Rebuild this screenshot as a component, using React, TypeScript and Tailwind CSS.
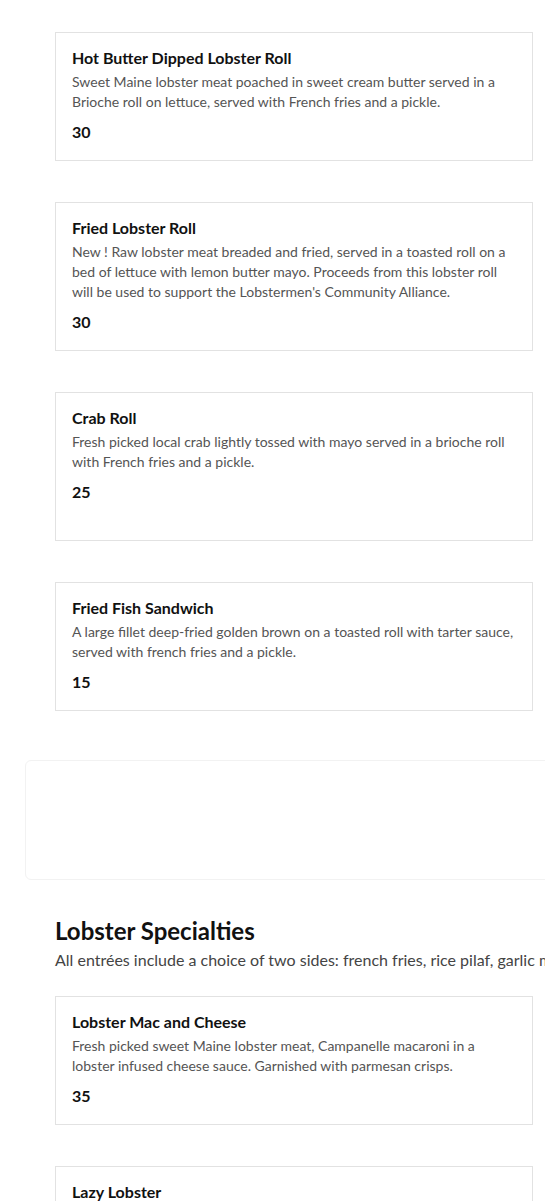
import React from "react";

type Item = {
  title: string;
  description: string;
  price: string;
  tall?: boolean;
};

const sandwiches: Item[] = [
  {
    title: "Hot Butter Dipped Lobster Roll",
    description:
      "Sweet Maine lobster meat poached in sweet cream butter served in a Brioche roll on lettuce, served with French fries and a pickle.",
    price: "30",
  },
  {
    title: "Fried Lobster Roll",
    description:
      "New ! Raw lobster meat breaded and fried, served in a toasted roll on a bed of lettuce with lemon butter mayo. Proceeds from this lobster roll will be used to support the Lobstermen's Community Alliance.",
    price: "30",
  },
  {
    title: "Crab Roll",
    description:
      "Fresh picked local crab lightly tossed with mayo served in a brioche roll with French fries and a pickle.",
    price: "25",
    tall: true,
  },
  {
    title: "Fried Fish Sandwich",
    description:
      "A large fillet deep-fried golden brown on a toasted roll with tarter sauce, served with french fries and a pickle.",
    price: "15",
  },
];

const specialties: Item[] = [
  {
    title: "Lobster Mac and Cheese",
    description:
      "Fresh picked sweet Maine lobster meat, Campanelle macaroni in a lobster infused cheese sauce. Garnished with parmesan crisps.",
    price: "35",
  },
  {
    title: "Lazy Lobster",
    description:
      "Fresh picked Maine lobster meat baked in butter and topped with seasoned cracker crumbs.",
    price: "40",
  },
];

const MenuCard = ({ item }: { item: Item }) => (
  <div
    className={`border border-[#e2e2e2] bg-white px-4 pt-[14px] pb-[17px] ${
      item.tall ? "min-h-[149px]" : ""
    }`}
  >
    <h3 className="text-[16px] leading-[22px] font-bold text-[#111]">{item.title}</h3>
    <p className="mt-[3px] text-[14px] leading-[20px] text-[#555]">{item.description}</p>
    <div className="mt-[9px] text-[16px] leading-[22px] font-bold text-[#111]">{item.price}</div>
  </div>
);

export default function App() {
  return (
    <div
      className="w-[545px] overflow-hidden bg-white"
      style={{ fontFamily: "Lato, 'Open Sans', sans-serif" }}
    >
      <div className="pl-[55px] pr-[12px] pt-[32px] flex flex-col gap-[41px]">
        {sandwiches.map((item) => (
          <MenuCard key={item.title} item={item} />
        ))}
      </div>

      <div className="ml-[25px] mt-[49px] h-[120px] w-[560px] rounded-md border border-[#f2f2f2]" />

      <div className="pl-[55px] pr-[12px] pt-[36px]">
        <h2 className="text-[24px] leading-[30px] font-bold text-[#111]">Lobster Specialties</h2>
        <p className="mt-[2px] whitespace-nowrap text-[16px] leading-[24px] text-[#444]">
          All entrées include a choice of two sides: french fries, rice pilaf, garlic mashed potatoes or coleslaw.
        </p>
        <div className="mt-[24px] flex flex-col gap-[41px] pb-10">
          {specialties.map((item) => (
            <MenuCard key={item.title} item={item} />
          ))}
        </div>
      </div>
    </div>
  );
}
